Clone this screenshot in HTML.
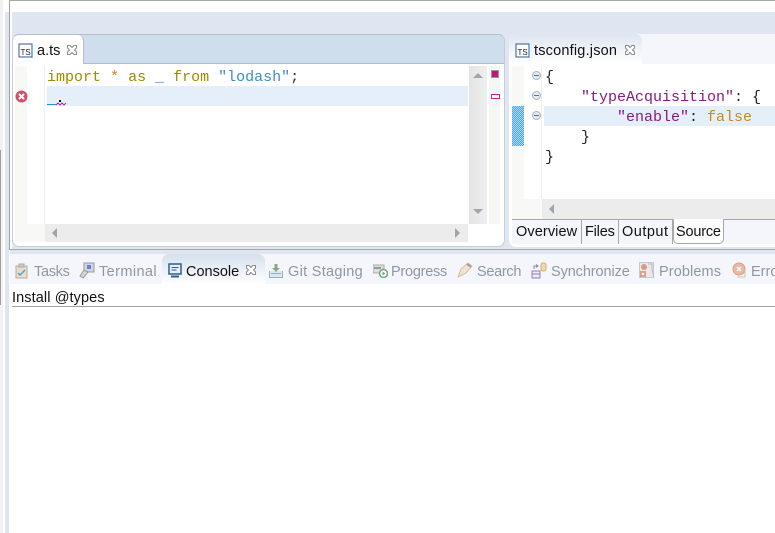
<!DOCTYPE html>
<html><head><meta charset="utf-8"><style>
html,body{margin:0;padding:0;background:#fff}
body{width:775px;height:533px;overflow:hidden;position:relative;font-family:"Liberation Sans",sans-serif;font-size:14.5px;color:#111}
div,span.a,svg{position:absolute}
.c{font-family:"Liberation Mono",monospace;font-size:15px;line-height:20px;white-space:pre;height:20px;margin-top:2px}
.t{white-space:pre;line-height:20px;height:20px}
.g{color:#8f97a3}
.k{color:#a08a00}.o{color:#d9822b}.s{color:#3a8fc4}.p{color:#8a1a7e}.f{color:#c98a1e}
</style></head><body>
<div style="left:0;top:0;width:3px;height:533px;background:#f1f1f1"></div>
<div style="left:0;top:150px;width:1px;height:155px;background:#a0a0a0"></div>
<div style="left:5px;top:12px;width:4px;height:521px;background:#dfe5f1"></div>
<div style="left:9px;top:0;width:1px;height:250px;background:#a0a0a0"></div>
<div style="left:9px;top:0;width:766px;height:1px;background:#a8a8a8"></div>

<div style="left:12px;top:12px;width:763px;height:238px;background:#dfe5f1"></div>

<!-- left editor -->
<div style="left:12px;top:34px;width:493px;height:213px;background:#fff;border:1px solid #c8ccd4;border-top-color:#b8bcc6;box-sizing:border-box;border-radius:7px"></div>
<div style="left:13px;top:35px;width:491px;height:29px;background:#cfdeec;border-radius:6px 6px 0 0"></div>
<div style="left:13px;top:35px;width:71px;height:29px;background:#fff;border-radius:6px 6px 0 0;border-right:1px solid #b8bcc6;box-sizing:border-box"></div>
<div style="left:84px;top:63px;width:420px;height:1px;background:#b8bcc6"></div>
<svg style="left:18px;top:43px" width="16" height="15"><rect x="1" y="1" width="13" height="13" fill="#fff" stroke="#2f5a8c"/><path d="M14.500 2v12.500H2" stroke="#7fb6e6" fill="none"/><text x="2.500" y="12" font-family="Liberation Sans" font-size="8" fill="#222">TS</text></svg>
<div class="t" style="left:37px;top:41px">a.ts</div>
<svg style="left:66px;top:44px" width="12" height="12"><path d="M1.500 1.500h2.500l2 2 2-2h2.500v2.500l-2 2 2 2v2.500h-2.500l-2-2-2 2h-2.500v-2.500l2-2-2-2z" fill="#fff" stroke="#8a8a8a"/></svg>

<div style="left:15px;top:66px;width:12px;height:158px;background:#f8f8f6"></div>
<div style="left:44px;top:66px;width:1px;height:158px;background:#efefef"></div>
<div style="left:47px;top:86px;width:421px;height:20px;background:#e5eff9"></div>
<div class="c" style="left:47px;top:66px"><span class="k">import</span> <span class="o">*</span> <span class="k">as</span> <span class="s">_</span> <span class="k">from</span> <span class="s">"lodash"</span><span style="color:#333">;</span></div>
<div style="left:47px;top:104px;width:10px;height:1px;background:#2e8fd6"></div>
<svg style="left:56px;top:100px" width="11" height="6"><rect x="3" y="0" width="2" height="2" fill="#111"/><path d="M0 5l2-2 2 2 2-2 2 2 2-2" stroke="#a8327e" fill="none"/></svg>
<svg style="left:15px;top:90px" width="13" height="13"><circle cx="6.500" cy="6.500" r="6" fill="#cf5365"/><path d="M4 4l5 5M9 4l-5 5" stroke="#fff" stroke-width="2"/></svg>

<!-- left scrollbars -->
<div style="left:469px;top:66px;width:18px;height:158px;background:linear-gradient(90deg,#e4e4e4,#efefef)"></div>
<svg style="left:473px;top:73px" width="10" height="5"><path d="M5 0l5 5H0z" fill="#a0a5ab"/></svg>
<svg style="left:473px;top:209px" width="10" height="5"><path d="M5 5l5-5H0z" fill="#a0a5ab"/></svg>
<div style="left:489px;top:66px;width:11px;height:158px;background:#f6f6f4"></div>
<div style="left:491px;top:70px;width:6px;height:6px;background:#bb1a78;border:1px solid #999"></div>
<div style="left:491px;top:94px;width:7px;height:3px;background:#fff;border:1px solid #c7297f"></div>
<div style="left:45px;top:224px;width:423px;height:18px;background:#ececec"></div>
<svg style="left:52px;top:228px" width="5" height="10"><path d="M0 5l5-5v10z" fill="#a0a5ab"/></svg>
<svg style="left:455px;top:228px" width="5" height="10"><path d="M5 5L0 0v10z" fill="#a0a5ab"/></svg>
<div style="left:15px;top:224px;width:30px;height:18px;background:#f8f8f6"></div>

<!-- right editor -->
<div style="left:509px;top:34px;width:266px;height:213px;background:#fff;border-radius:7px 0 0 7px"></div>
<div style="left:509px;top:34px;width:266px;height:30px;background:#f4f6fb;border-radius:7px 0 0 0"></div>
<div style="left:509px;top:34px;width:133px;height:30px;background:linear-gradient(#dfe6f0,#f2f5fa 60%,#fff);border-radius:7px 7px 0 0"></div>
<svg style="left:515px;top:43px" width="16" height="15"><rect x="1" y="1" width="13" height="13" fill="#fff" stroke="#2f5a8c"/><path d="M14.500 2v12.500H2" stroke="#7fb6e6" fill="none"/><text x="2.500" y="12" font-family="Liberation Sans" font-size="8" fill="#222">TS</text></svg>
<div class="t" style="left:534px;top:41px;letter-spacing:.2px">tsconfig.json</div>
<svg style="left:624px;top:44px" width="12" height="12"><path d="M1.500 1.500h2.500l2 2 2-2h2.500v2.500l-2 2 2 2v2.500h-2.500l-2-2-2 2h-2.500v-2.500l2-2-2-2z" fill="#fff" stroke="#8a8a8a"/></svg>

<div style="left:512px;top:66px;width:12px;height:133px;background:#f8f8f6"></div>
<div style="left:512px;top:106px;width:12px;height:40px;background:repeating-conic-gradient(#4fa8ee 0 25%,#a9d6f8 0 50%) 0 0/2px 2px"></div>
<div style="left:541px;top:66px;width:1px;height:133px;background:#efefef"></div>
<div style="left:544px;top:106px;width:231px;height:20px;background:#e5eff9"></div>
<svg style="left:531px;top:70px" width="11" height="51"><g fill="#e4e9f0" stroke="#a9b4c6"><circle cx="5.500" cy="5.500" r="4"/><circle cx="5.500" cy="25.500" r="4"/><circle cx="5.500" cy="45.500" r="4"/></g><path d="M3 5.500h5M3 25.500h5M3 45.500h5" stroke="#66707e"/></svg>
<div class="c" style="left:545px;top:66px;color:#222">{</div>
<div class="c" style="left:545px;top:86px;color:#222">    <span class="p">"typeAcquisition"</span>: {</div>
<div class="c" style="left:545px;top:106px;color:#222">        <span class="p">"enable"</span>: <span class="f">false</span></div>
<div class="c" style="left:545px;top:126px;color:#222">    }</div>
<div class="c" style="left:545px;top:146px;color:#222">}</div>

<div style="left:542px;top:199px;width:233px;height:20px;background:#ececec"></div>
<svg style="left:549px;top:204px" width="5" height="10"><path d="M0 5l5-5v10z" fill="#a0a5ab"/></svg>
<div style="left:512px;top:199px;width:30px;height:20px;background:#f8f8f6"></div>

<div style="left:512px;top:219px;width:263px;height:25px;background:#f4f6fb"></div>
<div style="left:512px;top:219px;width:263px;height:1px;background:#a8a8a8"></div>
<div style="left:581px;top:219px;width:1px;height:25px;background:#a8a8a8"></div>
<div style="left:618px;top:219px;width:1px;height:25px;background:#a8a8a8"></div>
<div style="left:672px;top:219px;width:1px;height:25px;background:#a8a8a8"></div>
<div style="left:673px;top:219px;width:51px;height:25px;background:#fff;border:1px solid #a8a8a8;border-top:none;box-sizing:border-box;border-radius:0 0 5px 5px"></div>
<div class="t" style="left:516px;top:222px;letter-spacing:.1px">Overview</div>
<div class="t" style="left:585px;top:222px;letter-spacing:-.2px">Files</div>
<div class="t" style="left:622px;top:222px;letter-spacing:.5px">Output</div>
<div class="t" style="left:676px;top:222px;letter-spacing:-.2px">Source</div>

<!-- bottom panel -->
<div style="left:10px;top:249px;width:765px;height:1px;background:#a8a8a8"></div>
<div style="left:10px;top:250px;width:765px;height:4px;background:#dfe5f1"></div>
<div style="left:10px;top:254px;width:765px;height:30px;background:#f4f6fb"></div>
<div style="left:162px;top:254px;width:103px;height:30px;background:linear-gradient(#d5e0ec,#f2f5fa 70%,#fff);border-radius:7px 7px 0 0"></div>

<svg style="left:14px;top:263px" width="16" height="16"><rect x="2" y="3" width="11" height="12" fill="#e8dccb" stroke="#b9ad9b"/><rect x="5" y="1" width="5" height="3" fill="#ccc" stroke="#aaa"/><path d="M4 10l2 2 5-5" stroke="#5a9bd8" stroke-width="1.500" fill="none"/></svg>
<div class="t g" style="left:34px;top:262px;letter-spacing:-.3px">Tasks</div>
<svg style="left:79px;top:262px" width="16" height="17"><rect x="5" y="1" width="10" height="9" fill="#cfd6e2" stroke="#9a9a9a"/><rect x="8" y="3" width="4" height="4" fill="#6b7fd8"/><path d="M5 8l-4 6 3 2 5-6z" fill="#d8d8d8" stroke="#999"/></svg>
<div class="t g" style="left:99px;top:262px;letter-spacing:.4px">Terminal</div>
<svg style="left:168px;top:263px" width="14" height="15"><rect x="1" y="1" width="12" height="10" fill="#e6eef7" stroke="#2f5f8f" stroke-width="1.500"/><path d="M3.500 4.500h7M3.500 7h5" stroke="#2f5f8f"/><path d="M3 13.500h8" stroke="#2f5f8f" stroke-width="2"/></svg>
<div class="t" style="left:186px;top:262px">Console</div>
<svg style="left:245px;top:264px" width="12" height="12"><path d="M1.500 1.500h2.500l2 2 2-2h2.500v2.500l-2 2 2 2v2.500h-2.500l-2-2-2 2h-2.500v-2.500l2-2-2-2z" fill="#fff" stroke="#8a8a8a"/></svg>

<svg style="left:268px;top:262px" width="16" height="17"><path d="M1.500 9v6.500h13V9" fill="#dbe6f2" stroke="#8fb0d0"/><path d="M3 11.500h10" stroke="#8fb0d0"/><path d="M6.500 2h3v4h2.500l-4 4-4-4h2.500z" fill="#86a88c"/></svg>
<div class="t g" style="left:288px;top:262px;letter-spacing:.3px">Git Staging</div>
<svg style="left:373px;top:264px" width="15" height="14"><rect x="0" y="1" width="11" height="8" fill="#ddd" stroke="#aaa"/><rect x="1" y="3" width="7" height="2" fill="#999"/><circle cx="10.500" cy="9.500" r="4" fill="#fff" stroke="#6fa58a" stroke-width="1.500"/><path d="M9.500 7.500l3 2-3 2z" fill="#6fa58a"/></svg>
<div class="t g" style="left:391px;top:262px;letter-spacing:-.25px">Progress</div>
<svg style="left:457px;top:262px" width="16" height="17"><path d="M1 15l3-8 7-6 4 3-6 7z" fill="#ece4da" stroke="#e3b98f"/><path d="M10 2l4 3" stroke="#a99" stroke-width="2"/></svg>
<div class="t g" style="left:477px;top:262px;letter-spacing:-.3px">Search</div>
<svg style="left:531px;top:262px" width="16" height="17"><rect x="1" y="9" width="8" height="7" fill="#efe9f5" stroke="#8e7fb8"/><path d="M1 12h8" stroke="#8e7fb8"/><rect x="10" y="1" width="5" height="8" rx="2" fill="#f0d9a8" stroke="#d4ad6a"/><path d="M3 7V4h4M5 2.500L7 4 5 5.500" stroke="#8e7fb8" fill="none"/></svg>
<div class="t g" style="left:551px;top:262px;letter-spacing:-.1px">Synchronize</div>
<svg style="left:639px;top:262px" width="15" height="17"><rect x="0.500" y="0.500" width="14" height="15" fill="#ece8e6" stroke="#c8c8d0"/><circle cx="5" cy="5" r="3" fill="#d99a8e"/><rect x="1" y="9" width="6" height="6" fill="#d9a28f"/><path d="M3 11l2 2M5 11l-2 2" stroke="#fff"/><path d="M9 2h4v6l2 7" stroke="#a9bdd6" fill="none"/></svg>
<div class="t g" style="left:659px;top:262px;letter-spacing:.1px">Problems</div>
<svg style="left:732px;top:262px" width="16" height="17"><circle cx="7" cy="7" r="6" fill="#e8b8a8" stroke="#d9a27f"/><path d="M5 5l4 4M9 5l-4 4" stroke="#fff" stroke-width="1.500"/><path d="M13 8v7H5" stroke="#d4c7a0" fill="none"/></svg>
<div class="t g" style="left:751px;top:262px">Erro</div>

<div class="t" style="left:12px;top:288px;letter-spacing:.1px">Install @types</div>
<div style="left:12px;top:306px;width:763px;height:1px;background:#a0a0a0"></div>
</body></html>
